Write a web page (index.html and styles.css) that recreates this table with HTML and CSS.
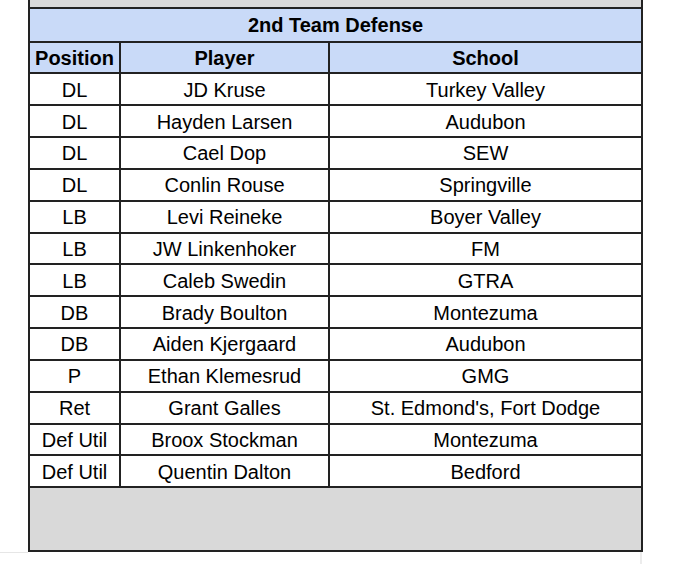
FILE: index.html
```html
<!DOCTYPE html>
<html lang="en">
<head>
<meta charset="utf-8">
<title>2nd Team Defense</title>
<link rel="stylesheet" href="styles.css">
</head>
<body>
<div class="page">
  <div class="strip"></div>
  <div class="sheet">
    <div class="title">2nd Team Defense</div>
    <div class="row head">
      <div class="cell pos">Position</div>
      <div class="cell player">Player</div>
      <div class="cell school">School</div>
    </div>
    <div class="row"><div class="cell pos">DL</div><div class="cell player">JD Kruse</div><div class="cell school">Turkey Valley</div></div>
    <div class="row"><div class="cell pos">DL</div><div class="cell player">Hayden Larsen</div><div class="cell school">Audubon</div></div>
    <div class="row"><div class="cell pos">DL</div><div class="cell player">Cael Dop</div><div class="cell school">SEW</div></div>
    <div class="row"><div class="cell pos">DL</div><div class="cell player">Conlin Rouse</div><div class="cell school">Springville</div></div>
    <div class="row"><div class="cell pos">LB</div><div class="cell player">Levi Reineke</div><div class="cell school">Boyer Valley</div></div>
    <div class="row"><div class="cell pos">LB</div><div class="cell player">JW Linkenhoker</div><div class="cell school">FM</div></div>
    <div class="row"><div class="cell pos">LB</div><div class="cell player">Caleb Swedin</div><div class="cell school">GTRA</div></div>
    <div class="row"><div class="cell pos">DB</div><div class="cell player">Brady Boulton</div><div class="cell school">Montezuma</div></div>
    <div class="row"><div class="cell pos">DB</div><div class="cell player">Aiden Kjergaard</div><div class="cell school">Audubon</div></div>
    <div class="row"><div class="cell pos">P</div><div class="cell player">Ethan Klemesrud</div><div class="cell school">GMG</div></div>
    <div class="row"><div class="cell pos">Ret</div><div class="cell player">Grant Galles</div><div class="cell school">St. Edmond's, Fort Dodge</div></div>
    <div class="row"><div class="cell pos">Def Util</div><div class="cell player">Broox Stockman</div><div class="cell school">Montezuma</div></div>
    <div class="row"><div class="cell pos">Def Util</div><div class="cell player">Quentin Dalton</div><div class="cell school">Bedford</div></div>
    <div class="footer"></div>
  </div>
  <div class="below">
    <div class="below-left"></div>
    <div class="below-right"></div>
  </div>
</div>
</body>
</html>
```

FILE: styles.css
```css
html, body {
  margin: 0;
  padding: 0;
  background: #ffffff;
}

body {
  font-family: "Liberation Sans", Arial, sans-serif;
  color: #000000;
  font-size: 20px;
}

.page {
  width: 680px;
  height: 564px;
  overflow: hidden;
}

.strip {
  margin-left: 28px;
  width: 611px;
  height: 7px;
  background: #d9d9d9;
  border-left: 2px solid #222;
  border-right: 2px solid #222;
}

.sheet {
  margin-left: 28px;
  width: 611px;
  border: 2px solid #222;
  border-bottom: none;
}

.title {
  height: 31.5px;
  padding-top: 2px;
  box-sizing: border-box;
  height: 33.5px;
  border-bottom: 2px solid #222;
  background: #c9daf8;
  font-weight: bold;
  display: flex;
  align-items: center;
  justify-content: center;
}

.row {
  display: grid;
  grid-template-columns: 91px 209px 311px;
  height: 31.85px;
  box-sizing: border-box;
  border-bottom: 2px solid #222;
}

.row.head {
  height: 31.8px;
  background: #c9daf8;
  font-weight: bold;
}

.cell {
  display: flex;
  align-items: center;
  justify-content: center;
  white-space: nowrap;
  padding-top: 2px;
  box-sizing: border-box;
}

.pos,
.player {
  border-right: 2px solid #222;
}

.footer {
  height: 61.7px;
  background: #d9d9d9;
  border-bottom: 2px solid #222;
}

.below {
  display: flex;
  height: 14px;
}

.below-left {
  width: 28px;
  border-top: 1px solid #e6e6e6;
}

.below-right {
  margin-left: 612px;
  width: 2px;
  background: #ececec;
}
```
